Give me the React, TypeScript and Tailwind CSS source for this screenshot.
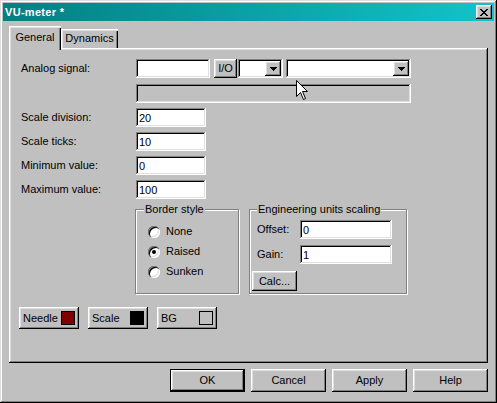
import React from "react";

const RAISED =
  "shadow-[inset_-1px_-1px_#000000,inset_1px_1px_#ffffff,inset_-2px_-2px_#808080,inset_2px_2px_#dfdfdf]";
const SUNKEN =
  "shadow-[inset_-1px_-1px_#ffffff,inset_1px_1px_#808080,inset_-2px_-2px_#dfdfdf,inset_2px_2px_#000000]";

function Field({ w, value }: { w: string; value?: string }) {
  return (
    <div className={`${w} h-[19px] bg-white ${SUNKEN} flex items-center pl-[3px] pt-[1px]`}>
      {value}
    </div>
  );
}

function Combo({ w }: { w: string }) {
  return (
    <div className={`${w} h-[19px] bg-white ${SUNKEN} flex p-[2px]`}>
      <div className="flex-1" />
      <div className={`w-[16px] h-full bg-[#c0c0c0] ${RAISED} flex items-center justify-center`}>
        <svg width="7" height="4" viewBox="0 0 7 4">
          <path d="M0 0h7v1h-1v1h-1v1h-1v1h-1v-1h-1v-1h-1v-1h-1z" fill="#000" />
        </svg>
      </div>
    </div>
  );
}

function Radio({ checked, label }: { checked?: boolean; label: string }) {
  return (
    <div className="flex items-center h-[13px]">
      <div className="w-[12px] h-[12px] rounded-full bg-white shadow-[inset_1px_1px_#808080,inset_2px_2px_#000000,inset_-1px_-1px_#ffffff,inset_-2px_-2px_#dfdfdf] flex items-center justify-center">
        {checked && <div className="w-[4px] h-[4px] rounded-full bg-black" />}
      </div>
      <span className="ml-[6px]">{label}</span>
    </div>
  );
}

function Row({ label, value }: { label: string; value: string }) {
  return (
    <div className="flex items-center h-[19px] ml-[12px]">
      <div className="w-[115px]">{label}</div>
      <Field w="w-[70px]" value={value} />
    </div>
  );
}

function ColorButton({ label, color }: { label: string; color: string }) {
  return (
    <div className={`w-[60px] h-[22px] bg-[#c0c0c0] ${RAISED} flex items-center pl-[4px] pr-[4px]`}>
      <span className="flex-1">{label}</span>
      <div className={`w-[14px] h-[14px] border border-[#000000] ${color}`} />
    </div>
  );
}

function Button({ label, def }: { label: string; def?: boolean }) {
  return (
    <div
      className={`w-[75px] h-[23px] bg-[#c0c0c0] flex items-center justify-center ${
        def
          ? "border border-black shadow-[inset_-1px_-1px_#000000,inset_1px_1px_#ffffff,inset_-2px_-2px_#808080,inset_2px_2px_#dfdfdf]"
          : RAISED
      }`}
    >
      {label}
    </div>
  );
}

export default function App() {
  return (
    <div className="relative w-[497px] h-[403px] bg-[#c0c0c0] p-[3px] flex flex-col text-[11px] leading-none text-black font-['Liberation_Sans',Arial,sans-serif] shadow-[inset_-1px_-1px_#000000,inset_1px_1px_#dfdfdf,inset_-2px_-2px_#808080,inset_2px_2px_#ffffff] select-none">
      {/* Title bar */}
      <div className="h-[18px] bg-linear-to-r from-[#047f82] to-[#12c4ca] flex items-center pl-[2px] pr-[2px]">
        <span className="flex-1 text-white font-bold text-[11px] tracking-[0.3px]">VU-meter *</span>
        <div className={`w-[16px] h-[14px] bg-[#c0c0c0] ${RAISED} flex items-center justify-center`}>
          <svg width="8" height="7" viewBox="0 0 8 7">
            <path
              d="M0 0h2v1h1v1h2v-1h1v-1h2v1h-1v1h-1v1h-1v1h1v1h1v1h1v1h-2v-1h-1v-1h-2v1h-1v1h-2v-1h1v-1h1v-1h1v-1h-1v-1h-1v-1h-1z"
              fill="#000"
            />
          </svg>
        </div>
      </div>

      <div className="flex flex-col px-[6px]">
        {/* Tabs */}
        <div className="mt-[5px] h-[22px] flex items-end">
          <div className="relative z-10 w-[52px] h-[24px] -mb-[2px] bg-[#c0c0c0] shadow-[inset_1px_1px_#ffffff,inset_2px_2px_#dfdfdf,inset_-1px_0_#000000,inset_-2px_0_#808080] flex items-start justify-center pt-[6px]">
            General
          </div>
          <div className="w-[57px] h-[19px] bg-[#c0c0c0] shadow-[inset_1px_1px_#ffffff,inset_2px_2px_#dfdfdf,inset_-1px_0_#000000,inset_-2px_0_#808080] flex items-start justify-center pt-[4px]">
            Dynamics
          </div>
        </div>

        {/* Panel */}
        <div className={`h-[315px] bg-[#c0c0c0] ${RAISED} flex flex-col`}>
          <div className="mt-[11px] ml-[12px] flex items-center h-[19px]">
            <div className="w-[115px]">Analog signal:</div>
            <Field w="w-[74px]" />
            <div className={`ml-[4px] w-[23px] h-[19px] bg-[#c0c0c0] ${RAISED} flex items-center justify-center`}>
              I/O
            </div>
            <div className="ml-[1px]">
              <Combo w="w-[45px]" />
            </div>
            <div className="ml-[3px]">
              <Combo w="w-[125px]" />
            </div>
          </div>
          <div className={`mt-[6px] ml-[127px] w-[275px] h-[19px] bg-[#c0c0c0] ${SUNKEN}`} />

          <div className="mt-[5px] flex flex-col gap-[5px]">
            <Row label="Scale division:" value="20" />
            <Row label="Scale ticks:" value="10" />
            <Row label="Minimum value:" value="0" />
            <Row label="Maximum value:" value="100" />
          </div>

          {/* Group boxes */}
          <div className="mt-[10px] ml-[126px] flex gap-[10px]">
            <div className="relative w-[104px] h-[85px] border border-[#808080] shadow-[inset_1px_1px_#ffffff,1px_1px_#ffffff]">
              <span className="absolute left-[8px] -top-[7px] bg-[#c0c0c0] px-[1px] leading-[13px]">
                Border style
              </span>
              <div className="flex flex-col gap-[7px] pt-[15px] pl-[12px]">
                <Radio label="None" />
                <Radio label="Raised" checked />
                <Radio label="Sunken" />
              </div>
            </div>
            <div className="relative w-[158px] h-[85px] border border-[#808080] shadow-[inset_1px_1px_#ffffff,1px_1px_#ffffff]">
              <span className="absolute left-[7px] -top-[7px] bg-[#c0c0c0] px-[1px] leading-[13px]">
                Engineering units scaling
              </span>
              <div className="flex flex-col pt-[10px] pl-[2px]">
                <div className="flex items-center h-[19px] ml-[5px]">
                  <div className="w-[43px]">Offset:</div>
                  <Field w="w-[92px]" value="0" />
                </div>
                <div className="flex items-center h-[19px] ml-[5px] mt-[6px]">
                  <div className="w-[43px]">Gain:</div>
                  <Field w="w-[92px]" value="1" />
                </div>
                <div className={`mt-[7px] w-[45px] h-[20px] bg-[#c0c0c0] ${RAISED} flex items-center justify-center`}>
                  Calc...
                </div>
              </div>
            </div>
          </div>

          {/* Color buttons */}
          <div className="mt-[13px] ml-[10px] flex gap-[9px]">
            <ColorButton label="Needle" color="bg-[#800000]" />
            <ColorButton label="Scale" color="bg-[#000000]" />
            <ColorButton label="BG" color="bg-[#c0c0c0]" />
          </div>
        </div>

        {/* Bottom buttons */}
        <div className="mt-[6px] flex justify-end gap-[6px]">
          <Button label="OK" def />
          <Button label="Cancel" />
          <Button label="Apply" />
          <Button label="Help" />
        </div>
      </div>

      {/* Mouse cursor */}
      <svg className="absolute left-[296px] top-[80px]" width="13" height="21" viewBox="0 0 13 21">
        <path
          d="M0.5 0.5 L0.5 16.5 L4.5 12.5 L7.5 19.5 L9.5 18.5 L6.5 11.5 L11.5 11.5 Z"
          fill="#ffffff"
          stroke="#000000"
          strokeWidth="1"
        />
      </svg>
    </div>
  );
}
